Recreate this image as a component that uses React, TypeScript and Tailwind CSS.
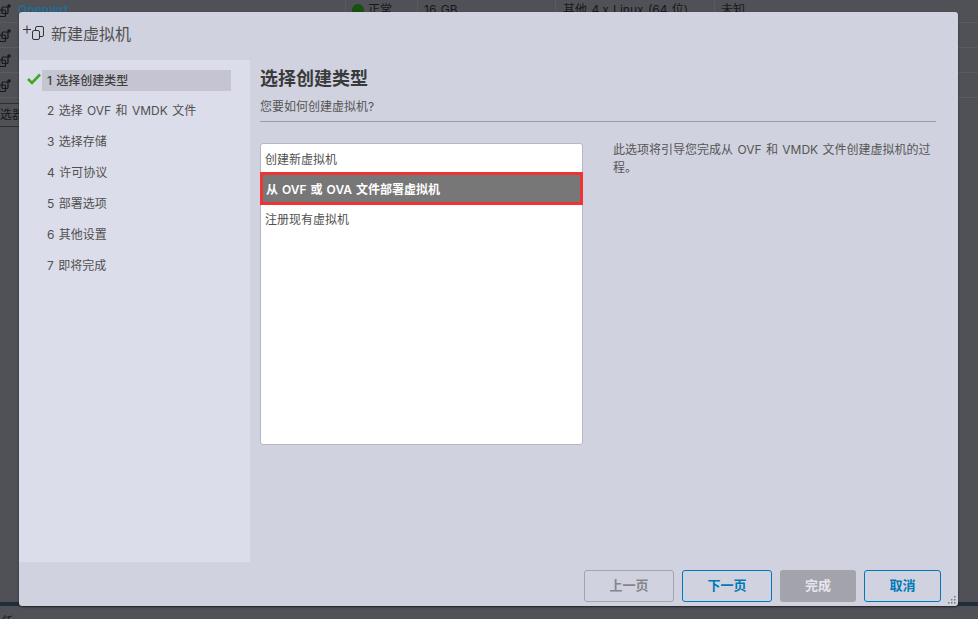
import React from "react";

const FONT = "font-['Inter','Noto_Sans_CJK_SC','Noto_Sans',sans-serif]";

function VmIcon() {
  return (
    <svg viewBox="0 0 12 13" className="h-[13px] w-[12px] -ml-[1px] shrink-0" fill="none" stroke="currentColor" strokeWidth="1.200">
      <rect x="3" y="3" width="6" height="6.500" rx="1" />
      <rect x="0.500" y="6" width="6" height="6.500" rx="1" />
      <circle cx="10" cy="2" r="1.800" fill="currentColor" stroke="none" />
    </svg>
  );
}

function BgRow({ children }: { children?: React.ReactNode }) {
  return (
    <div className="flex h-[25px] items-center border-b border-[#5a5b61] text-[#15181c]">
      <VmIcon />
      {children}
    </div>
  );
}

const steps = [
  "2 选择 OVF 和 VMDK 文件",
  "3 选择存储",
  "4 许可协议",
  "5 部署选项",
  "6 其他设置",
  "7 即将完成",
];

export default function App() {
  return (
    <div className={`relative h-[619px] w-[978px] overflow-hidden bg-[#505156] text-[12px] [word-spacing:1px] ${FONT}`}>
      {/* dimmed page behind the dialog */}
      <div className="flex h-full flex-col">
        <div className="-mt-[2px]">
          <BgRow>
            <span className="ml-[7px] w-[327px] shrink-0 text-[12px] font-semibold text-[#1f6e94]">Openwrt</span>
            <span className="flex h-full w-[72px] shrink-0 items-center border-l border-[#5a5b61] pl-[6px]">
              <span className="mr-[4px] h-[12px] w-[12px] rounded-full bg-[#17500f]" />
              正常
            </span>
            <span className="flex h-full w-[138px] shrink-0 items-center border-l border-[#5a5b61] pl-[6px]">16 GB</span>
            <span className="flex h-full w-[159px] shrink-0 items-center border-l border-[#5a5b61] pl-[7px]">其他 4.x Linux (64 位)</span>
            <span className="flex h-full items-center border-l border-[#5a5b61] pl-[6px]">未知</span>
          </BgRow>
          <BgRow />
          <BgRow />
          <BgRow />
        </div>
        <div className="mt-[5px] flex h-[24px] w-[19px] items-center whitespace-nowrap border-y border-[#2e2f33] text-[#15181c]">
          选器
        </div>
        <div className="mt-auto h-[4px] bg-[#1f2e3a]" />
        <div className="h-[13px] pl-[1px] pt-[9px] leading-[14px] text-[#15181c]">任</div>
      </div>

      {/* dialog */}
      <div className="absolute left-[19px] top-[12px] flex h-[594px] w-[939px] flex-col overflow-hidden rounded-[3px] bg-[#d0d2df] shadow-[0_1px_2px_rgba(0,0,0,0.6)]">
        <div className="flex h-[48px] shrink-0 items-center pb-[4px] pl-[4px]">
          <svg viewBox="0 0 24 20" className="h-[20px] w-[24px] text-[#333]" fill="none" stroke="currentColor" strokeWidth="1">
            <path d="M0 5.500h8M4 1.500v8" />
            <rect x="12.500" y="2.500" width="8" height="10" rx="1.500" />
            <rect x="9.500" y="6.500" width="7" height="9" rx="1.500" fill="#d0d2df" />
          </svg>
          <span className="ml-[4px] text-[16px] leading-[20px] text-[#505050]">新建虚拟机</span>
        </div>

        <div className="flex min-h-0 flex-1">
          <div className="w-[231px] shrink-0 bg-[#dcddea] pl-[8px] pt-[10px] text-[#505050]">
            <div className="flex items-center">
              <svg viewBox="0 0 14 12" className="h-[12px] w-[14px] shrink-0 -translate-y-[2px]">
                <path d="M1 6l4 4L13 1.500" fill="none" stroke="#3aab26" strokeWidth="2.600" />
              </svg>
              <div className="ml-[1px] flex h-[21px] w-[189px] items-center bg-[#c4c5d1] pl-[5px] font-medium text-[#3f3f3f]">
                1 选择创建类型
              </div>
            </div>
            <div className="ml-[20px] mt-[4px] flex flex-col">
              {steps.map((s) => (
                <div key={s} className="flex h-[31px] items-center">
                  {s}
                </div>
              ))}
            </div>
          </div>

          <div className="flex min-w-0 flex-1 flex-col pl-[10px] pr-[22px] pt-[6px]">
            <h1 className="text-[18px] font-semibold leading-[26px] text-[#3a3a3a]">选择创建类型</h1>
            <p className="mt-[6px] border-b border-[#999aa6] pb-[5px] text-[12px] leading-[18px] text-[#555]">
              您要如何创建虚拟机?
            </p>
            <div className="mt-[21px] flex gap-[30px]">
              <div className="h-[302px] w-[323px] shrink-0 rounded-[3px] border border-[#b6b7c0] bg-white text-[#505050]">
                <div className="flex h-[29px] items-center pl-[4px] pt-[2px]">创建新虚拟机</div>
                <div className="-mx-px -mt-px flex h-[33px] items-center border-[3px] border-[#ee3333] bg-[#777777] pl-[3px] pt-[2px] font-semibold text-white">
                  从 OVF 或 OVA 文件部署虚拟机
                </div>
                <div className="flex h-[28px] items-center pl-[4px] pt-[2px]">注册现有虚拟机</div>
              </div>
              <p className="-mt-[2px] w-[325px] text-[12px] leading-[18px] text-[#555]">
                此选项将引导您完成从 OVF 和 VMDK 文件创建虚拟机的过程。
              </p>
            </div>
          </div>
        </div>

        <div className="relative flex h-[44px] shrink-0 items-start justify-end pr-[17px] pt-[8px] text-[13px] font-semibold">
          <button className="h-[32px] w-[90px] rounded-[3px] border border-[#a3a4ad] text-[#85868c]">上一页</button>
          <button className="ml-[8px] h-[32px] w-[90px] rounded-[3px] border border-[#0079b8] text-[#0079b8]">下一页</button>
          <button className="ml-[8px] h-[32px] w-[76px] rounded-[3px] bg-[#a2a3ab] text-[#e6e6ec]">完成</button>
          <button className="ml-[8px] h-[32px] w-[77px] rounded-[3px] border border-[#0079b8] text-[#0079b8]">取消</button>
          <svg viewBox="0 0 8 8" className="absolute bottom-[2px] right-[2px] h-[8px] w-[8px] text-[#777]" fill="currentColor">
            <rect x="6" y="0" width="1.500" height="1.500" />
            <rect x="3" y="3" width="1.500" height="1.500" />
            <rect x="6" y="3" width="1.500" height="1.500" />
            <rect x="0" y="6" width="1.500" height="1.500" />
            <rect x="3" y="6" width="1.500" height="1.500" />
            <rect x="6" y="6" width="1.500" height="1.500" />
          </svg>
        </div>
      </div>
    </div>
  );
}
